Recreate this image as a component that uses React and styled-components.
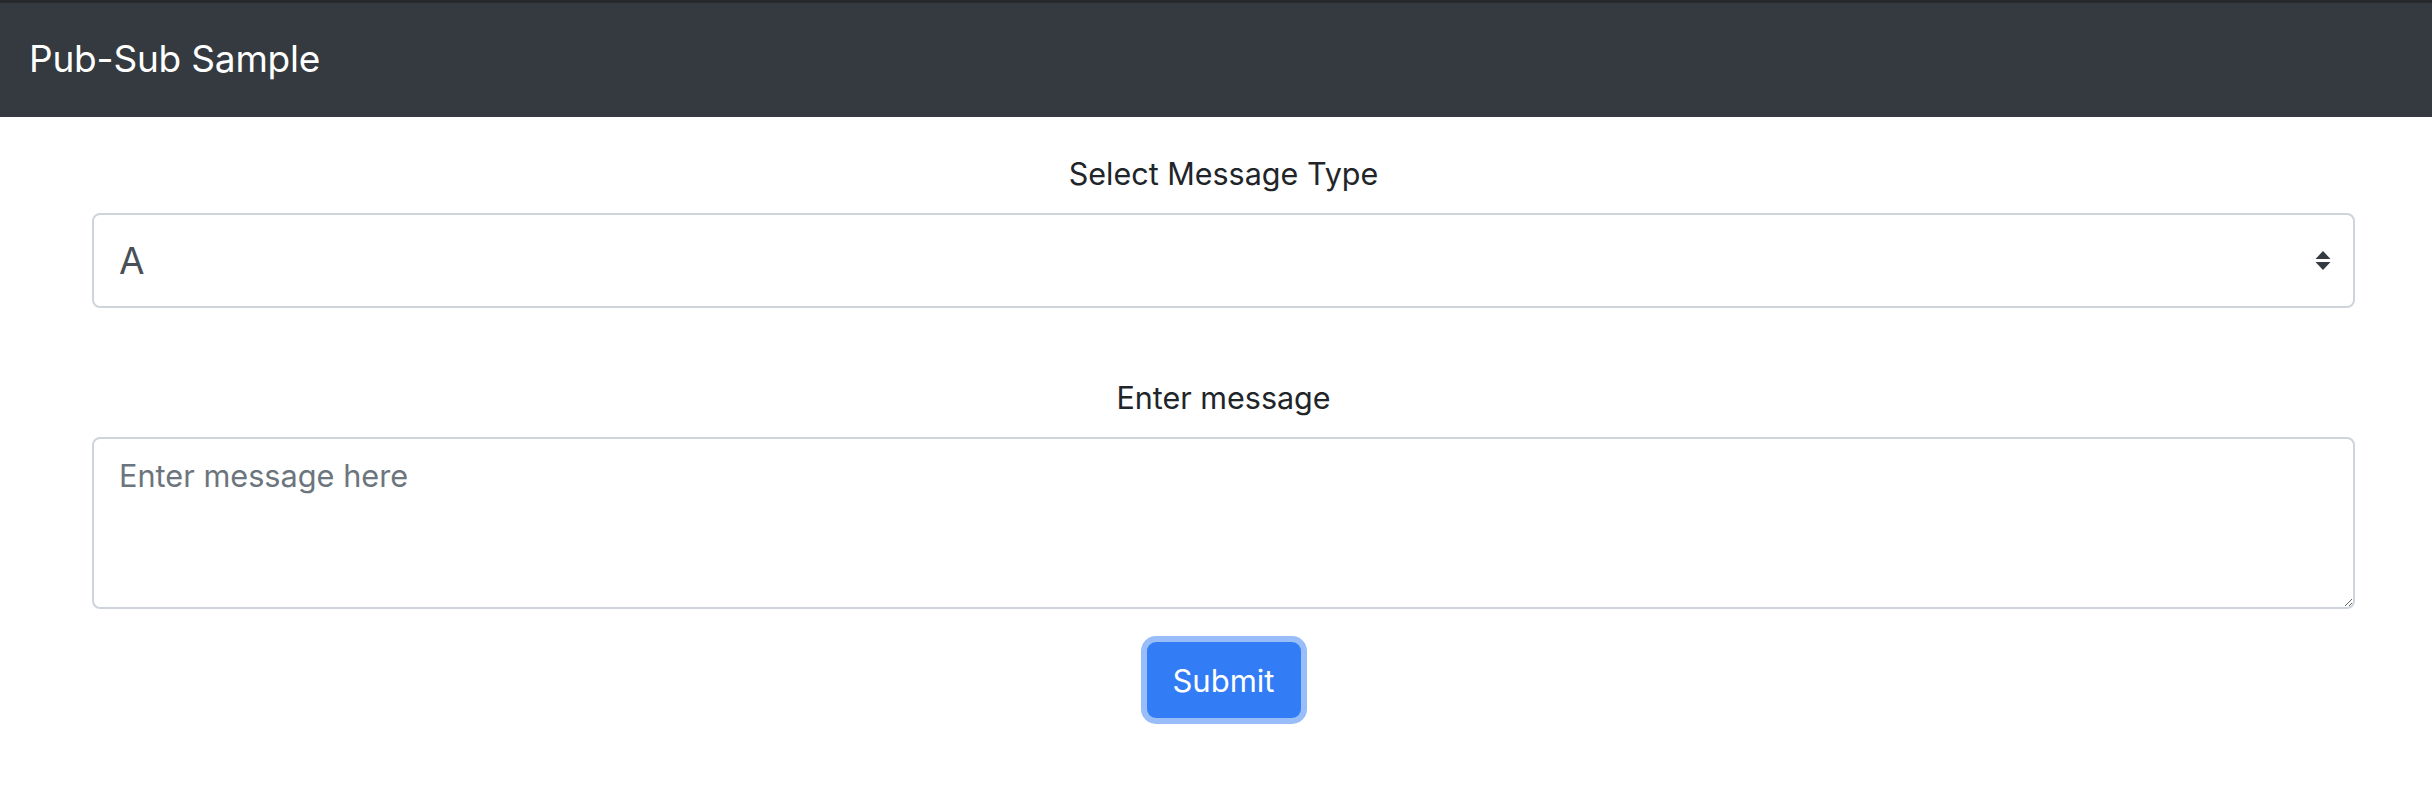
import React from "react";
import styled, { createGlobalStyle } from "styled-components";

const GlobalStyle = createGlobalStyle`
  html, body {
    margin: 0;
    padding: 0;
    background: #ffffff;
    font-family: Inter, "Liberation Sans", sans-serif;
    color: #212529;
  }
  * { box-sizing: border-box; }
`;

export default function App() {
  return (
    <>
      <GlobalStyle />
      <Navbar>
        <Brand>Pub-Sub Sample</Brand>
      </Navbar>
      <Form onSubmit={(e) => e.preventDefault()}>
        <Label htmlFor="type">Select Message Type</Label>
        <SelectWrap>
          <Select id="type" defaultValue="A">
            <option value="A">A</option>
            <option value="B">B</option>
          </Select>
          <Arrows width="16" height="20" viewBox="0 0 16 20">
            <path d="M8 0 L15.5 8 L0.5 8 Z" fill="#343a40" />
            <path d="M0.5 11 L15.5 11 L8 19 Z" fill="#343a40" />
          </Arrows>
        </SelectWrap>
        <Label htmlFor="msg" $top={68}>Enter message</Label>
        <TextArea id="msg" placeholder="Enter message here" />
        <ButtonRow>
          <SubmitButton type="submit">Submit</SubmitButton>
        </ButtonRow>
      </Form>
    </>
  );
}

const Navbar = styled.nav`
  height: 117px;
  border-top: 3px solid #26282b;
  background: #343a40;
  display: flex;
  align-items: center;
  padding: 0 29px 4px;
`;

const Brand = styled.span`
  color: #ffffff;
  font-size: 37px;
  line-height: 1;
  letter-spacing: -0.2px;
`;

const Form = styled.form`
  display: flex;
  flex-direction: column;
  padding: 35px 77px 40px 92px;
`;

const Label = styled.label`
  display: block;
  text-align: center;
  font-size: 30.5px;
  line-height: 43px;
  margin-top: ${(p) => p.$top || 0}px;
  margin-bottom: 18px;
`;

const SelectWrap = styled.div`
  position: relative;
`;

const Select = styled.select`
  display: block;
  width: 100%;
  height: 95px;
  appearance: none;
  -webkit-appearance: none;
  border: 2px solid #ced4da;
  border-radius: 8px;
  background: #ffffff;
  color: #495057;
  font-family: Inter, "Liberation Sans", sans-serif;
  font-size: 37px;
  padding: 0 60px 0 25px;
  outline: none;
`;

const Arrows = styled.svg`
  position: absolute;
  right: 24px;
  top: 38px;
  pointer-events: none;
`;

const TextArea = styled.textarea`
  display: block;
  width: 100%;
  height: 172px;
  border: 2px solid #ced4da;
  border-radius: 8px;
  padding: 13px 25px;
  font-family: Inter, "Liberation Sans", sans-serif;
  font-size: 30.7px;
  line-height: 48px;
  color: #495057;
  resize: vertical;
  outline: none;
  &::placeholder {
    color: #6c757d;
  }
`;

const ButtonRow = styled.div`
  display: flex;
  justify-content: center;
  margin-top: 33px;
`;

const SubmitButton = styled.button`
  width: 154px;
  height: 76px;
  border: none;
  border-radius: 9px;
  background: #327cf6;
  color: #ffffff;
  font-family: Inter, "Liberation Sans", sans-serif;
  font-size: 31px;
  box-shadow: 0 0 0 6px #98bdf9;
  cursor: pointer;
`;
